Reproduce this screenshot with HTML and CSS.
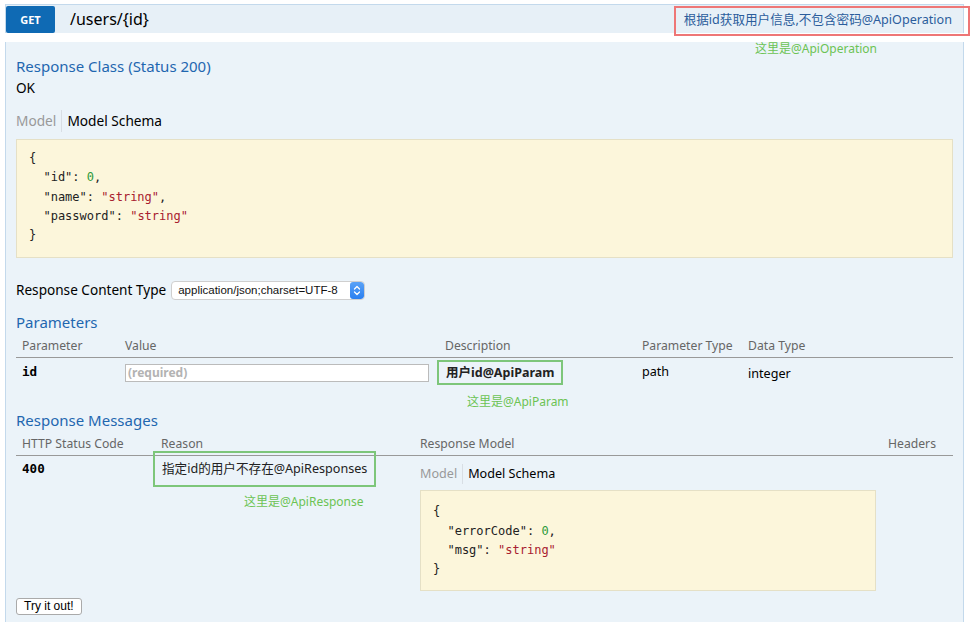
FILE: index.html
```html
<!DOCTYPE html>
<html lang="zh">
<head>
<meta charset="utf-8">
<title>/users/{id}</title>
<link rel="stylesheet" href="styles.css">
</head>
<body>
<div class="op">
  <div class="heading">
    <span class="verb">GET</span>
    <span class="path">/users/{id}</span>
    <span class="summary">根据id获取用户信息,不包含密码@ApiOperation</span>
  </div>
  <div class="content">
    <div class="note note-op">这里是@ApiOperation</div>
    <h4 class="h4 h4-first">Response Class (Status 200)</h4>
    <div class="ok">OK</div>
    <div class="tabs">
      <span class="tab tab-off">Model</span><span class="tab tab-on">Model Schema</span>
    </div>
    <pre class="code code-main">{
  "id": <span class="num">0</span>,
  "name": <span class="str">"string"</span>,
  "password": <span class="str">"string"</span>
}</pre>
    <div class="ctype">
      <span class="ctype-label">Response Content Type</span>
      <span class="select"><span class="select-text">application/json;charset=UTF-8</span><span class="stepper"><svg width="8" height="11" viewBox="0 0 8 11"><path d="M1.5 4 L4 1.5 L6.5 4 M1.5 7 L4 9.5 L6.5 7" fill="none" stroke="#fff" stroke-width="1.3" stroke-linecap="round" stroke-linejoin="round"/></svg></span></span>
    </div>
    <h4 class="h4 h4-params">Parameters</h4>
    <table class="tbl params">
      <colgroup><col class="c1"><col class="c2"><col class="c3"><col class="c4"><col></colgroup>
      <thead>
        <tr><th>Parameter</th><th>Value</th><th>Description</th><th>Parameter Type</th><th>Data Type</th></tr>
      </thead>
      <tbody>
        <tr>
          <td class="pname">id</td>
          <td><div class="input">(required)</div></td>
          <td><span class="desc-box">用户id@ApiParam</span><div class="note note-param">这里是@ApiParam</div></td>
          <td class="ptype">path</td>
          <td class="dtype">integer</td>
        </tr>
      </tbody>
    </table>
    <h4 class="h4 h4-resp">Response Messages</h4>
    <table class="tbl resp">
      <colgroup><col class="r1"><col class="r2"><col class="r3"><col></colgroup>
      <thead>
        <tr><th>HTTP Status Code</th><th>Reason</th><th>Response Model</th><th>Headers</th></tr>
      </thead>
      <tbody>
        <tr>
          <td class="code400">400</td>
          <td><span class="reason-box">指定id的用户不存在@ApiResponses</span><div class="note note-resp">这里是@ApiResponse</div></td>
          <td class="rmodel">
            <div class="tabs tabs-small"><span class="tab tab-off">Model</span><span class="tab tab-on">Model Schema</span></div>
            <pre class="code code-small">{
  "errorCode": <span class="num">0</span>,
  "msg": <span class="str">"string"</span>
}</pre>
          </td>
          <td></td>
        </tr>
      </tbody>
    </table>
    <button class="try" type="button">Try it out!</button>
  </div>
</div>
</body>
</html>
```

FILE: styles.css
```css
html, body {
  margin: 0;
  padding: 0;
  background: #fff;
}
body {
  font-family: "Noto Sans", "Noto Sans CJK SC", sans-serif;
  color: #000;
}
.op {
  margin: 4px 13px 0 5px;
}
.heading {
  display: flex;
  align-items: center;
  height: 29px;
  box-sizing: border-box;
  background: #e7f0f7;
  border: 1px solid #c3d9ec;
  border-bottom: none;
}
.verb {
  display: flex;
  align-items: center;
  justify-content: center;
  width: 49px;
  height: 27px;
  background: #0f6ab4;
  color: #fff;
  border-radius: 2px;
  font-size: 11px;
  font-weight: bold;
}
.path {
  margin-left: 15px;
  font-size: 16px;
  line-height: 20px;
  color: #000;
}
.summary {
  position: relative;
  z-index: 1;
  margin-left: auto;
  margin-right: -7px;
  align-self: flex-start;
  margin-top: 1px;
  padding: 4px 16px 6px 8px;
  border: 2px solid #ee7676;
  font-size: 12.6px;
  line-height: 16px;
  color: #2b5d9c;
}
.content {
  background: #ebf3f9;
  border: 1px solid #c3d9ec;
  border-top: none;
  padding: 0 10px 7px 10px;
}
.note {
  font-size: 12px;
  line-height: 14px;
  color: #6cc354;
}
.note-op {
  text-align: right;
  padding-right: 76px;
  margin-top: 9px;
}
.h4 {
  margin: 0;
  font-size: 15px;
  line-height: 20px;
  font-weight: normal;
  color: #1f67b0;
}
.ok {
  margin-top: 3px;
  font-size: 13.6px;
  line-height: 18px;
}
.tabs {
  display: flex;
  align-items: center;
  margin-top: 13px;
  font-size: 13.7px;
  line-height: 18px;
}
.tab {
  display: block;
}
.tab-off {
  color: #999;
  padding-right: 5px;
  border-right: 1px solid #d8dee4;
  padding-top: 2px;
  padding-bottom: 2px;
}
.tab-on {
  padding-left: 5px;
  color: #000;
}
.code {
  margin: 0;
  background: #fcf6db;
  border: 1px solid #e5e0c6;
  font-family: "DejaVu Sans Mono", monospace;
  font-size: 12px;
  line-height: 19.3px;
  color: #222;
}
.code-main {
  margin-top: 7px;
  padding: 9px 12px 12px 12px;
}
.num { color: #2d9a3a; }
.str { color: #a8202f; }
.ctype {
  display: flex;
  align-items: center;
  margin-top: 22px;
  height: 20px;
}
.ctype-label {
  font-size: 13.6px;
  line-height: 18px;
}
.select {
  display: flex;
  align-items: center;
  margin-left: 5px;
  width: 194px;
  height: 19px;
  box-sizing: border-box;
  background: #fff;
  border: 1px solid #cfcfcf;
  border-radius: 4px;
  overflow: hidden;
}
.select-text {
  flex: 1;
  padding-left: 6px;
  font-family: "Liberation Sans", Arial, sans-serif;
  font-size: 11.5px;
  line-height: 17px;
  color: #111;
}
.stepper {
  display: flex;
  align-items: center;
  justify-content: center;
  width: 14px;
  height: 17px;
  background: linear-gradient(#5aa2f7, #2a7ff0);
  border-radius: 3px;
}
.h4-params {
  margin-top: 12px;
}
.tbl {
  width: 100%;
  border-collapse: collapse;
  table-layout: fixed;
}
.tbl th {
  text-align: left;
  font-weight: normal;
  font-size: 12.2px;
  line-height: 16px;
  color: #666;
  padding: 6px 6px 3px 6px;
  border-bottom: 1px solid #999;
  white-space: nowrap;
}
.tbl td {
  vertical-align: top;
  padding: 0 6px;
  font-size: 12.6px;
  line-height: 16px;
}
.c1 { width: 103px; }
.c2 { width: 320px; }
.c3 { width: 197px; }
.c4 { width: 106px; }
.pname {
  font-family: "DejaVu Sans Mono", monospace;
  font-weight: bold;
  font-size: 13px;
  padding-top: 6px !important;
}
.input {
  margin-top: 6px;
  width: 304px;
  height: 18px;
  box-sizing: border-box;
  background: #fff;
  border: 1px solid #bbb;
  font-size: 12px;
  line-height: 16px;
  font-weight: bold;
  color: #b3b3b3;
  padding-left: 2px;
}
.desc-box {
  display: inline-block;
  margin-top: 2px;
  margin-left: -8px;
  padding: 2px 7px;
  border: 2px solid #7dc67a;
  font-size: 12.5px;
  line-height: 17px;
  font-weight: bold;
  color: #222;
}
.note-param {
  margin-top: 10px;
  padding-left: 22px;
}
.ptype {
  padding-top: 6px !important;
}
.dtype {
  padding-top: 8px !important;
}
.h4-resp {
  margin-top: 1px;
}
.r1 { width: 139px; }
.r2 { width: 259px; }
.r3 { width: 468px; }
.code400 {
  font-family: "DejaVu Sans Mono", monospace;
  font-weight: bold;
  font-size: 13px;
  padding-top: 5px !important;
}
.reason-box {
  display: inline-block;
  margin-top: -5px;
  margin-left: -8px;
  padding: 8px 7px;
  border: 2px solid #7dc67a;
  font-size: 12.6px;
  line-height: 16px;
  color: #222;
  white-space: nowrap;
}
.note-resp {
  margin-top: 8px;
  padding-left: 83px;
}
.tabs-small {
  margin-top: 8px;
  font-size: 12.6px;
  line-height: 16px;
}
.code-small {
  margin-top: 6px;
  width: 456px;
  box-sizing: border-box;
  padding: 11px 12px 10px 12px;
}
.try {
  display: block;
  margin-top: 7px;
  height: 17px;
  padding: 0 7px;
  background: #fff;
  border: 1px solid #aaa;
  border-radius: 3px;
  font-family: "Liberation Sans", Arial, sans-serif;
  font-size: 12px;
  line-height: 15px;
  color: #000;
}
```
